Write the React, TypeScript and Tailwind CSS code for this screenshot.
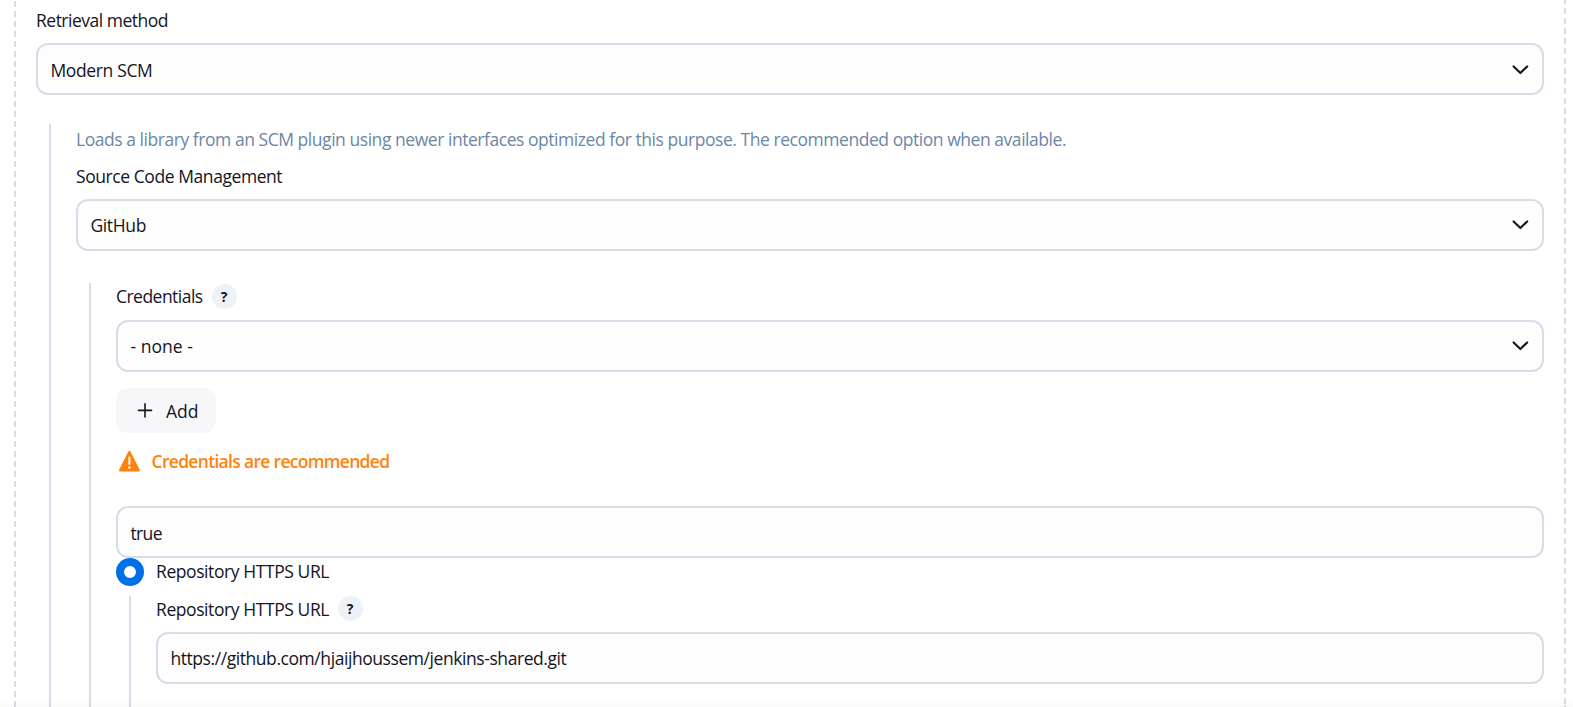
import type { ReactNode } from "react";

function Chevron() {
  return (
    <svg className="h-4 w-5 shrink-0" viewBox="0 0 20 16" fill="none" stroke="#14141f" strokeWidth="2.1" strokeLinecap="round" strokeLinejoin="round">
      <path d="M3.6 4.4 10.4 11.1 17.2 4.4" />
    </svg>
  );
}

function Field({ children, select = false, className = "" }: { children: ReactNode; select?: boolean; className?: string }) {
  return (
    <div className={`flex h-[52px] shrink-0 items-center justify-between rounded-xl border-2 border-[#d6dde9] bg-[#fdfdfd] pr-3 pl-[12.4px] ${className}`}>
      {children}
      {select && <Chevron />}
    </div>
  );
}

function Help() {
  return (
    <span className="flex h-[25px] w-[25px] items-center justify-center rounded-full bg-[#eef1f5] pr-px text-[14px] leading-none font-bold">
      ?
    </span>
  );
}

function Nested({ children, className = "" }: { children: ReactNode; className?: string }) {
  return <div className={`ml-[13px] flex flex-col border-l-2 border-[#d6dde9] pl-[25px] ${className}`}>{children}</div>;
}

export default function App() {
  return (
    <div className="relative flex h-[707px] w-[1573px] overflow-hidden bg-white pl-[14px] font-['Open_Sans','Noto_Sans',sans-serif] text-[17.5px] leading-6 whitespace-nowrap text-[#14141f]">
      <div className="w-[2px] shrink-0 bg-[repeating-linear-gradient(to_bottom,#d6dde9_0px,#d6dde9_6px,transparent_6px,transparent_10px)] bg-[position:0_1px]" />
      <main className="flex w-[1548px] shrink-0 flex-col pt-2 pr-5 pl-5">
        <div className="h-6 shrink-0 tracking-[-0.5px]">Retrieval method</div>
        <Field select className="mt-[11px] pt-[2px]">
          <span className="tracking-[-0.35px]">Modern SCM</span>
        </Field>
        <Nested className="mt-[29px] h-[583px] pt-[3px]">
          <div className="h-6 shrink-0 tracking-[-0.455px] text-[#6b87a8]">
            Loads a library from an SCM plugin using newer interfaces optimized for this purpose. The recommended option when available.
          </div>
          <div className="mt-[13px] h-6 shrink-0 tracking-[-0.43px]">Source Code Management</div>
          <Field select className="mt-[11px]">
            <span className="tracking-[-0.35px]">GitHub</span>
          </Field>
          <Nested className="mt-8 grow pt-px">
            <div className="flex h-[25px] shrink-0 items-start gap-2">
              <span className="w-[88px] tracking-[-0.53px]">Credentials</span>
              <Help />
            </div>
            <Field select className="mt-[11px]">
              <span className="tracking-[0.05px]">- none -</span>
            </Field>
            <button className="mt-4 flex h-[45px] w-[100px] shrink-0 items-center rounded-xl bg-[#f7f7fa] pl-[21px]">
              <svg className="h-4 w-4" viewBox="0 0 16 16" fill="none" stroke="#14141f" strokeWidth="1.6" strokeLinecap="round">
                <path d="M8 0.9v13M1.5 7.4h13" />
              </svg>
              <span className="ml-[13px] pt-px">Add</span>
            </button>
            <div className="mt-4 flex h-6 shrink-0 items-center font-semibold text-[#ff820d]">
              <svg className="ml-[2px] h-[22px] w-[23px] shrink-0" viewBox="0 0 23 22">
                <path d="M11.4 1.8 20.9 20.5H1.9Z" fill="#ff820d" stroke="#ff820d" strokeWidth="2" strokeLinejoin="round" />
                <path d="M11.4 7.5v6.4" stroke="#fff" strokeWidth="2" strokeLinecap="round" />
                <circle cx="11.4" cy="17.5" r="1.3" fill="#fff" />
              </svg>
              <span className="ml-[10.5px] tracking-[-0.69px]">Credentials are recommended</span>
            </div>
            <Field className="mt-[33px] pt-[2px]">
              <span className="tracking-[-0.6px]">true</span>
            </Field>
            <div className="flex h-7 shrink-0 items-start">
              <span className="h-7 w-7 rounded-full border-8 border-[#0070e8] bg-white" />
              <span className="ml-3 pt-px tracking-[-0.42px]">Repository HTTPS URL</span>
            </div>
            <Nested className="mt-[10px] grow">
              <div className="flex h-[25px] shrink-0 items-start gap-2">
                <span className="w-[174px] pt-px tracking-[-0.42px]">Repository HTTPS URL</span>
                <Help />
              </div>
              <Field className="mt-[11px]">
                <span className="tracking-[-0.43px]">https://github.com/hjaijhoussem/jenkins-shared.git</span>
              </Field>
            </Nested>
          </Nested>
        </Nested>
      </main>
      <div className="w-[2px] shrink-0 bg-[repeating-linear-gradient(to_bottom,#d6dde9_0px,#d6dde9_6px,transparent_6px,transparent_10px)] bg-[position:0_-2px]" />
      <div className="absolute inset-x-0 bottom-0 h-2 bg-linear-to-b from-transparent to-black/2" />
    </div>
  );
}
